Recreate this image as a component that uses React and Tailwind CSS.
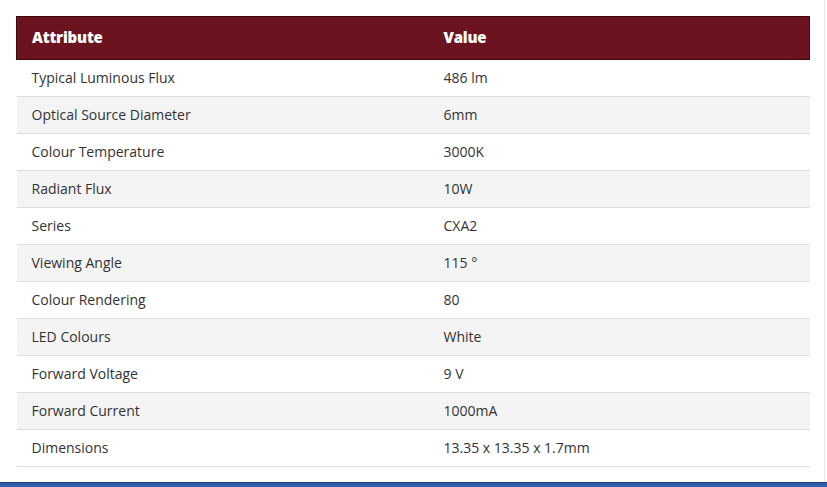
const rows = [
  ["Typical Luminous Flux", "486 lm"],
  ["Optical Source Diameter", "6mm"],
  ["Colour Temperature", "3000K"],
  ["Radiant Flux", "10W"],
  ["Series", "CXA2"],
  ["Viewing Angle", "115 °"],
  ["Colour Rendering", "80"],
  ["LED Colours", "White"],
  ["Forward Voltage", "9 V"],
  ["Forward Current", "1000mA"],
  ["Dimensions", "13.35 x 13.35 x 1.7mm"],
];

export default function App() {
  return (
    <div className="h-[487px] w-[827px] flex flex-col bg-white overflow-hidden" style={{ fontFamily: '"Open Sans", sans-serif' }}>
      <div className="flex-1 flex">
        <div className="w-[825px] border-r border-[#e6e6e6] pt-[16px] pl-[16px] pr-[14px]">
          <table className="w-[794px] border-collapse text-[14px] text-[#333]">
            <thead>
              <tr className="h-[43px] bg-[#6b141f] border border-[#3f0910]">
                <th className="w-[412px] pl-[15px] pb-[1px] text-left text-[15px] font-extrabold text-white tracking-[-0.2px]">Attribute</th>
                <th className="pl-[15px] pb-[1px] text-left text-[15px] font-extrabold text-white tracking-[-0.2px]">Value</th>
              </tr>
            </thead>
            <tbody>
              {rows.map(([attr, val], i) => (
                <tr key={attr} className={`h-[37px] border-b border-[#dedede] ${i % 2 ? "bg-[#f4f4f4]" : "bg-white"}`}>
                  <td className="pl-[15px] pb-[1px]">{attr}</td>
                  <td className="pl-[15px] pb-[1px]">{val}</td>
                </tr>
              ))}
            </tbody>
          </table>
        </div>
      </div>
      <div className="h-[5px] bg-[#2f5ea8] border-t border-[#1f3f75]" />
    </div>
  );
}
